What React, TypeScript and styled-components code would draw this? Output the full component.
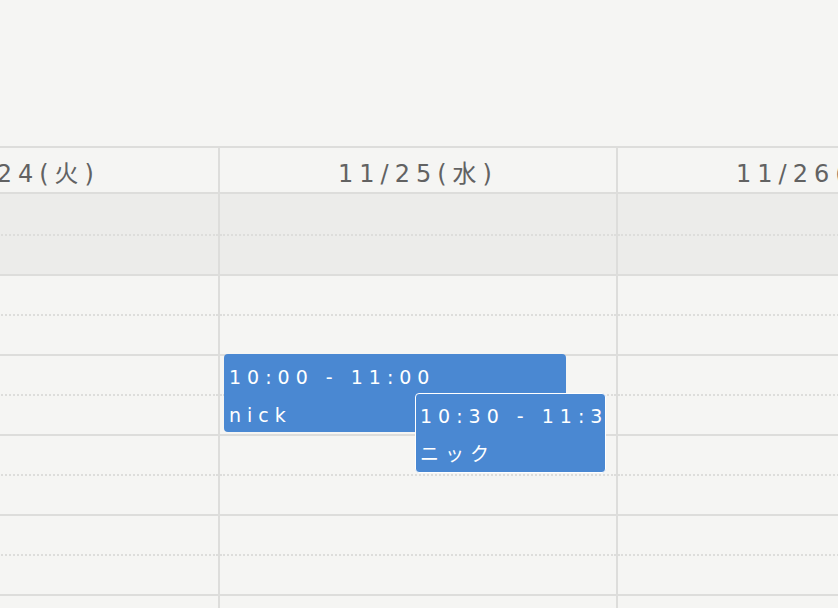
import styled, { createGlobalStyle } from "styled-components";

const GlobalStyle = createGlobalStyle`
  html, body {
    margin: 0;
    padding: 0;
    background: #f5f5f3;
    overflow: hidden;
  }
  * {
    box-sizing: border-box;
  }
`;

type CalEvent = {
  id: string;
  start: number; // minutes from midnight
  end: number;
  title: string;
  left: number;
  width: number;
  stacked?: boolean;
};

type Day = {
  label: string;
  events: CalEvent[];
};

const DAY_START = 9 * 60;
const SLOT_MIN = 30;
const SLOT_PX = 40;
const ROWS = 9;

const days: Day[] = [
  { label: "11/24(火)", events: [] },
  {
    label: "11/25(水)",
    events: [
      { id: "a", start: 600, end: 660, title: "nick", left: 4, width: 342 },
      { id: "b", start: 630, end: 690, title: "ニック", left: 195, width: 191, stacked: true },
    ],
  },
  { label: "11/26(木)", events: [] },
];

const pad = (n: number) => String(n).padStart(2, "0");
const fmt = (m: number) => `${pad(Math.floor(m / 60))}:${pad(m % 60)}`;

const App = () => {
  return (
    <>
      <GlobalStyle />
      <Page>
        <TopSpace />
        <Calendar>
          <Week>
            {days.map((day) => (
              <DayColumn key={day.label}>
                <HeaderCell>{day.label}</HeaderCell>
                <AllDayRow />
                <AllDayRow $dotted />
                <Body>
                  {Array.from({ length: ROWS }).map((_, i) => (
                    <SlotRow key={i} $dotted={i % 2 === 1} />
                  ))}
                  {day.events.map((ev) => {
                    const top = ((ev.start - DAY_START) / SLOT_MIN) * SLOT_PX;
                    const height = ((ev.end - ev.start) / SLOT_MIN) * SLOT_PX - 2;
                    return (
                      <Event
                        key={ev.id}
                        $stacked={ev.stacked}
                        style={{
                          top: ev.stacked ? top - 1 : top,
                          height: ev.stacked ? height + 2 : height,
                          left: ev.left,
                          width: ev.width,
                        }}
                      >
                        <EventLine>
                          {fmt(ev.start)} - {fmt(ev.end)}
                        </EventLine>
                        <EventLine>{ev.title}</EventLine>
                      </Event>
                    );
                  })}
                </Body>
              </DayColumn>
            ))}
          </Week>
        </Calendar>
      </Page>
    </>
  );
};

export default App;

const Page = styled.div`
  width: 838px;
  height: 608px;
  overflow: hidden;
  font-family: "DejaVu Sans", Verdana, "Noto Sans CJK JP", sans-serif;
`;

const TopSpace = styled.div`
  height: 146px;
`;

const Calendar = styled.div`
  width: 100%;
  overflow: hidden;
`;

const Week = styled.div`
  display: grid;
  grid-template-columns: repeat(3, 398px);
  margin-left: -180px;
  width: max-content;
`;

const DayColumn = styled.div`
  display: flex;
  flex-direction: column;
  border-left: 2px solid #dddddb;
`;

const HeaderCell = styled.div`
  height: 48px;
  border-top: 2px solid #dddddb;
  border-bottom: 2px solid #dddddb;
  display: flex;
  align-items: center;
  justify-content: center;
  padding-top: 2px;
  font-size: 24px;
  letter-spacing: 6px;
  color: #626262;
  white-space: nowrap;
`;

const AllDayRow = styled.div<{ $dotted?: boolean }>`
  height: 40px;
  background: #ececea;
  border-top: ${(p) => (p.$dotted ? "2px dotted #dddddb" : "none")};
`;

const Body = styled.div`
  position: relative;
`;

const SlotRow = styled.div<{ $dotted?: boolean }>`
  height: 40px;
  border-top: 2px ${(p) => (p.$dotted ? "dotted" : "solid")} #dddddb;
`;

const Event = styled.div<{ $stacked?: boolean }>`
  position: absolute;
  background: #4a88d2;
  border-radius: 4px;
  border: ${(p) => (p.$stacked ? "1px solid #fff" : "none")};
  padding: ${(p) => (p.$stacked ? "3px 4px" : "4px 5px")};
  color: #fff;
  overflow: hidden;
  white-space: nowrap;
`;

const EventLine = styled.div`
  font-size: 19px;
  line-height: 38px;
  letter-spacing: 6px;
`;
